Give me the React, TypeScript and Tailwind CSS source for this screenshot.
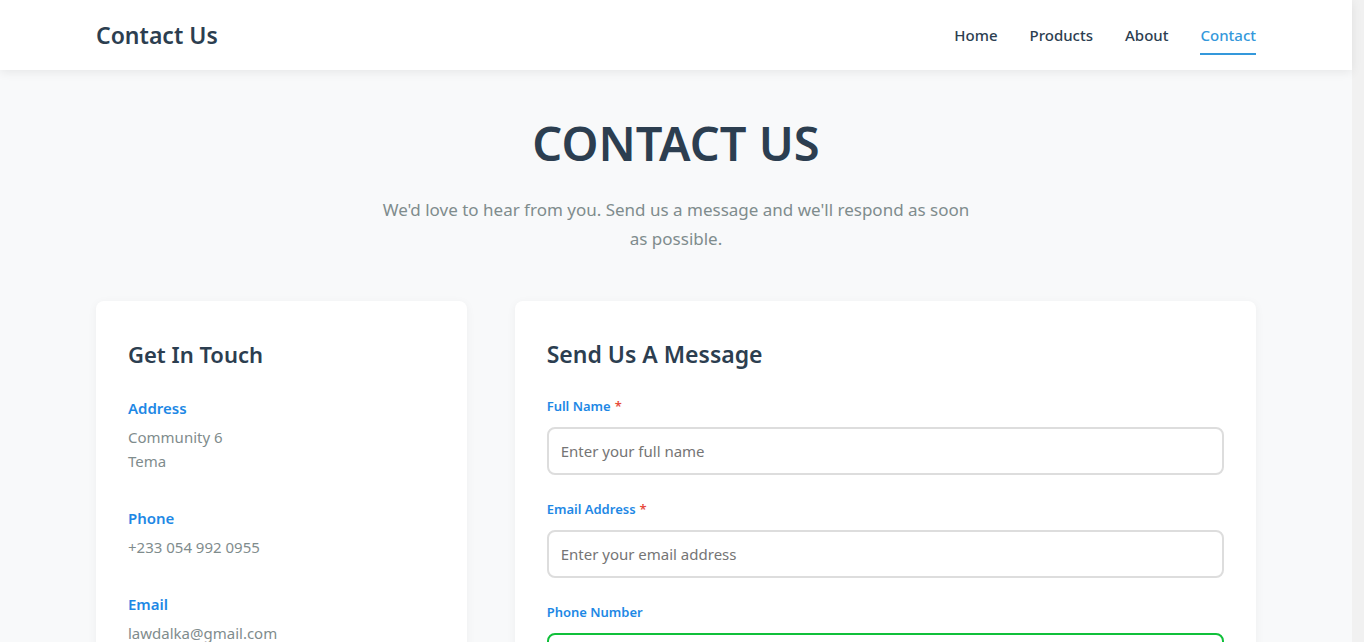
import React from 'react';

const font = { fontFamily: '"Noto Sans", "Open Sans", sans-serif' };

const navLinks = ['Home', 'Products', 'About', 'Contact'];

const ContactItem: React.FC<{ label: string; lines: string[] }> = ({ label, lines }) => (
  <div className="mb-[33px]">
    <h3 className="mb-[5px] text-[15px] font-semibold leading-6 text-[#1e88e5]">{label}</h3>
    {lines.map((line) => (
      <p key={line} className="text-[15px] leading-6 text-[#7f8c8d]">
        {line}
      </p>
    ))}
  </div>
);

const Field: React.FC<{
  label: string;
  placeholder: string;
  required?: boolean;
  type?: string;
  valid?: boolean;
}> = ({ label, placeholder, required, type = 'text', valid }) => (
  <div className="flex flex-col">
    <label className="mb-2.5 text-[13px] font-semibold leading-[21px] text-[#1e88e5]">
      {label}
      {required && <span className="ml-1 text-[#e74c3c]">*</span>}
    </label>
    <input
      type={type}
      placeholder={placeholder}
      className={
        'h-12 w-full rounded-lg border-2 bg-white px-3 text-[15px] text-[#2c3e50] outline-none placeholder:text-[#757575] ' +
        (valid ? 'border-[#10c03a]' : 'border-[#dddddd]')
      }
    />
  </div>
);

export default function App() {
  return (
    // right gutter where the browser's scrollbar sits in the reference
    <div className="min-h-screen bg-[#f1f1f1] pr-3" style={font}>
      <div className="min-h-screen bg-[#f8f9fa]">
        <header className="relative z-10 bg-white shadow-[0_2px_10px_rgba(0,0,0,0.08)]">
          <div className="mx-auto flex h-[70px] max-w-[1160px] items-center justify-between">
            <h1 className="text-[23px] font-semibold text-[#2c3e50]">Contact Us</h1>
            <nav className="flex gap-8">
              {navLinks.map((link) => (
                <a
                  key={link}
                  href="#"
                  className={
                    'relative text-[15px] font-medium leading-6 ' +
                    (link === 'Contact'
                      ? 'text-[#3498db] after:absolute after:left-0 after:right-0 after:-bottom-[8px] after:h-[2px] after:bg-[#3498db]'
                      : 'text-[#2c3e50]')
                  }
                >
                  {link}
                </a>
              ))}
            </nav>
          </div>
        </header>

        <main className="mx-auto max-w-[1160px] pb-16">
          <section className="flex flex-col items-center pt-[44px] text-center">
            <h2 className="text-[47px] font-semibold leading-[58px] text-[#2c3e50]">CONTACT US</h2>
            <p className="mt-[23px] max-w-[600px] text-[17px] leading-[29px] text-[#7f8c8d]">
              We'd love to hear from you. Send us a message and we'll respond as soon as possible.
            </p>
          </section>

          <div className="mt-12 grid grid-cols-[1fr_2fr] items-start gap-12">
            <div className="rounded-lg bg-white px-8 pb-6 pt-[35px] shadow-[0_2px_10px_rgba(0,0,0,0.05)]">
              <h2 className="mb-6 text-[22px] font-semibold leading-9 text-[#2c3e50]">Get In Touch</h2>
              <ContactItem label="Address" lines={['Community 6', 'Tema']} />
              <ContactItem label="Phone" lines={['+233 054 992 0955']} />
              <ContactItem label="Email" lines={['lawdalka@gmail.com']} />
              <ContactItem label="Business Hours" lines={['Mon - Fri: 8:00 AM - 6:00 PM', 'Sat: 9:00 AM - 2:00 PM']} />
            </div>

            <div className="rounded-lg bg-white px-8 pb-8 pt-[35px] shadow-[0_2px_10px_rgba(0,0,0,0.05)]">
              <h2 className="mb-6 text-[23px] font-semibold leading-9 text-[#2c3e50]">Send Us A Message</h2>
              <form className="flex flex-col gap-6">
                <Field label="Full Name" placeholder="Enter your full name" required />
                <Field label="Email Address" placeholder="Enter your email address" required type="email" />
                <Field label="Phone Number" placeholder="Enter your phone number" valid />
                <div className="flex flex-col">
                  <label className="mb-2.5 text-[13px] font-semibold leading-[21px] text-[#1e88e5]">
                    Message<span className="ml-1 text-[#e74c3c]">*</span>
                  </label>
                  <textarea
                    rows={5}
                    placeholder="Write your message here..."
                    className="w-full rounded-lg border-2 border-[#dddddd] px-3 py-3 text-[15px] outline-none placeholder:text-[#757575]"
                  />
                </div>
                <button
                  type="button"
                  className="h-12 rounded-lg bg-[#3498db] text-[15px] font-semibold text-white"
                >
                  Send Message
                </button>
              </form>
            </div>
          </div>
        </main>
      </div>
    </div>
  );
}
